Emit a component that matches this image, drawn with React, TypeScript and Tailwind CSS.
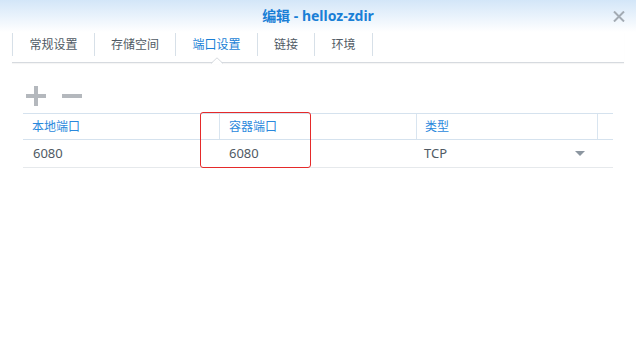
import React from "react";

const tabs = [
  { label: "常规设置", w: "w-[82px]" },
  { label: "存储空间", w: "w-[81px]" },
  { label: "端口设置", w: "w-[82px]", active: true },
  { label: "链接", w: "w-[57px]" },
  { label: "环境", w: "w-[58px]" },
];

export default function App() {
  return (
    <div
      className="relative w-[636px] h-[347px] bg-white overflow-hidden text-[#505a64]"
      style={{ fontFamily: '"Noto Sans", "Noto Sans CJK SC", sans-serif' }}
    >
      {/* 标题栏 */}
      <div className="relative h-[32px] bg-gradient-to-b from-[#d3e6f8] to-white flex items-center justify-center">
        <span className="text-[14px] font-bold text-[#1a7fd6] leading-none">编辑 - helloz-zdir</span>
        <svg className="absolute right-[11px] top-[11px] w-[12px] h-[11px]" viewBox="0 0 12 11">
          <path d="M1 0.5 L11 10.5 M11 0.5 L1 10.5" stroke="#a3abb3" strokeWidth={2} fill="none" />
        </svg>
      </div>

      {/* 选项卡 */}
      <div className="mx-[12px] h-[31px] border-b border-[#d6dadf] shadow-[0_1px_1px_rgba(0,0,0,0.04)] flex items-start pt-[1px]">
        {tabs.map((t) => (
          <div
            key={t.label}
            className={`relative ${t.w} h-[23px] border-l border-[#d7e0e8] flex items-center justify-center text-[12px] ${
              t.active ? "text-[#1a7fd6]" : "text-[#505a64]"
            }`}
          >
            {t.label}
            {t.active && (
              <svg className="absolute left-1/2 -translate-x-1/2 top-[24px] w-[12px] h-[7px]" viewBox="0 0 12 7">
                <path d="M0 7 L6 1 L12 7 Z" fill="white" />
                <path d="M0 6.5 L6 0.8 L12 6.5" stroke="#d6dadf" strokeWidth={1} fill="none" />
              </svg>
            )}
          </div>
        ))}
        <div className="h-[23px] border-l border-[#d7e0e8]" />
      </div>

      {/* 工具栏 */}
      <div className="flex items-center gap-[16px] pl-[26px] pt-[15px] h-[50px]">
        <svg className="w-[20px] h-[20px]" viewBox="0 0 20 20">
          <path d="M8 0 H12 V8 H20 V12 H12 V20 H8 V12 H0 V8 H8 Z" fill="#b4b8bd" />
        </svg>
        <svg className="w-[20px] h-[20px]" viewBox="0 0 20 20">
          <rect x="0" y="8" width="20" height="4" fill="#b4b8bd" />
        </svg>
      </div>

      {/* 端口表格 */}
      <div className="relative mx-[23px]">
        <div className="flex h-[27px] border-y border-[#d5e2ee] text-[12px] text-[#2a88dc]">
          <div className="w-[196px] flex items-center pl-[9px]">本地端口</div>
          <div className="w-[197px] flex items-center pl-[9px] border-l border-[#d9e5f0]">容器端口</div>
          <div className="w-[181px] flex items-center pl-[8px] border-l border-[#d9e5f0]">类型</div>
          <div className="flex-1 border-l border-[#d9e5f0]" />
        </div>
        <div className="flex h-[28px] border-b border-[#e6e9ec] text-[13px] text-[#505a64]">
          <div className="w-[196px] flex items-center pl-[10px]">6080</div>
          <div className="w-[197px] flex items-center pl-[10px]">6080</div>
          <div className="w-[181px] flex items-center justify-between pl-[8px] pr-[12px]">
            <span>TCP</span>
            <svg className="w-[10px] h-[5px]" viewBox="0 0 10 5">
              <path d="M0 0 H10 L5 5 Z" fill="#8c96a0" />
            </svg>
          </div>
        </div>
        {/* 红色标注框 */}
        <div className="absolute left-[177px] top-[-1px] w-[111px] h-[56px] border border-[#e52a2a] rounded-[3px] pointer-events-none" />
      </div>
    </div>
  );
}
